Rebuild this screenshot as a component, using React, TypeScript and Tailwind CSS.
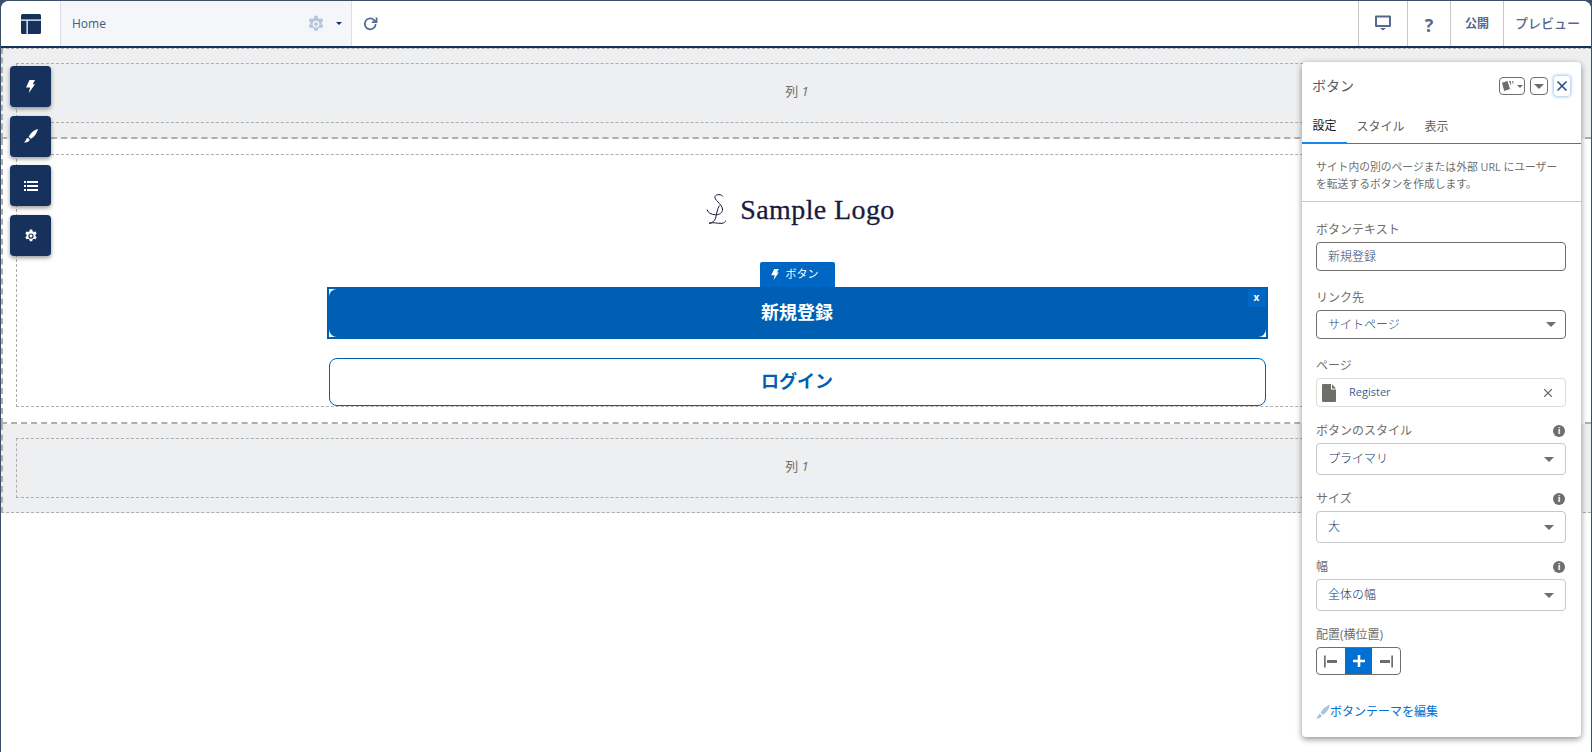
import { X } from "lucide-react";
import type { ReactNode } from "react";

const cjk = "font-['Open_Sans','Noto_Sans_CJK_JP',sans-serif]";

function Caret() {
  return <span className="inline-block w-0 h-0 border-x-[5px] border-x-transparent border-t-[5.5px] border-t-[#706e6b]" />;
}

function Bolt({ className }: { className?: string }) {
  return (
    <svg viewBox="0 0 9 13" className={className} fill="currentColor">
      <path d="M3.500 0H9L6.800 4.200H9L2.800 13l1.300-5.600H0z" />
    </svg>
  );
}

function Brush({ className }: { className?: string }) {
  return (
    <svg viewBox="0 0 14 14" className={className} fill="currentColor">
      <path d="M14 0C10 1 6.500 4 4.700 7.800l2 2C10 8.500 13 4 14 0z" />
      <path d="M3.800 8.700C2 9.200 2 12 0 13.500c2.800.3 5.500-.6 5.700-3z" />
    </svg>
  );
}

function ListIcon({ className }: { className?: string }) {
  return (
    <svg viewBox="0 0 14 10" className={className} fill="currentColor">
      <path d="M0 0h2v2H0zM3 0h11v2H3zM0 4h2v2H0zM3 4h11v2H3zM0 8h2v2H0zM3 8h11v2H3z" />
    </svg>
  );
}

function Gear({ className }: { className?: string }) {
  return (
    <svg viewBox="0 0 24 24" className={className} fill="currentColor" fillRule="evenodd">
      <path d="M10 1h4l.7 3 2.100 1.200 2.900-.9 2 3.400-2.200 2.100v2.400l2.200 2.100-2 3.400-2.900-.9-2.100 1.200-.7 3h-4l-.7-3-2.100-1.200-2.900.9-2-3.400 2.200-2.100V9.800L2.300 7.700l2-3.400 2.900.9L9.300 4zM12 7.500a4.500 4.500 0 1 0 0 9 4.500 4.500 0 0 0 0-9z" />
      <circle cx="12" cy="12" r="2.500" />
    </svg>
  );
}

function Tool({ children }: { children: ReactNode }) {
  return (
    <div className="w-[41px] h-[41px] rounded-[4px] bg-[#16325c] text-white flex items-center justify-center shadow-[0_2px_4px_rgba(0,0,0,0.4)]">
      {children}
    </div>
  );
}

function Field({ label, info, children }: { label: string; info?: boolean; children: ReactNode }) {
  return (
    <div>
      <div className="flex items-center justify-between h-[18px] mb-[3px] text-[12px] text-[#706e6b]">
        <span>{label}</span>
        {info && (
          <span className="mr-[1px] w-[12px] h-[12px] rounded-full bg-[#706e6b] text-white text-[9px] font-bold leading-[12px] text-center">i</span>
        )}
      </div>
      {children}
    </div>
  );
}

function SelectBox({ value }: { value: string }) {
  return (
    <div className="h-[32px] rounded-[4px] border border-[#c9c7c5] flex items-center justify-between pl-[11px] pr-[11px] text-[12px] text-[#16325c] font-light">
      <span>{value}</span>
      <Caret />
    </div>
  );
}

function Logo() {
  return (
    <div className="ml-[7px] flex items-center gap-[14px] text-[#1a1a3e]">
      <svg viewBox="0 0 20 30" className="w-[20px] h-[30px]" fill="none" stroke="currentColor" strokeWidth="1">
        <path d="M17 2.500C15.500.3 10.500-.3 9 2.500 7.500 5.500 16 10 16.500 15c.3 3.500-3 6-7 5.800C5 20.500 2 19 1 15.500" />
        <path d="M13.500 11.500C11 15 10.500 21 9.500 24.500 9 26.500 6.500 29 3 29.300c5-1.500 8.500.5 13 0 2-.2 3.300-1.300 4-3" />
      </svg>
      <span className="font-['Liberation_Serif',serif] text-[28px] leading-none tracking-[0.4px] mt-[3px] [-webkit-text-stroke:0.3px]">Sample Logo</span>
    </div>
  );
}

function Panel() {
  return (
    <div className={`absolute left-[1302px] top-[62px] w-[279px] h-[675px] bg-white rounded-[4px] shadow-[0_2px_6px_rgba(0,0,0,0.45)] ${cjk}`}>
      <div className="h-[48px] flex items-center justify-between pl-[10px] pr-[10px]">
        <span className="text-[14px] text-[#5a5a58] mt-[-1px]">ボタン</span>
        <div className="flex items-center gap-[5px]">
          <div className="w-[26px] h-[18px] border border-[#706e6b] rounded-[4px] flex items-center justify-center gap-[2px]">
            <svg viewBox="0 0 13 10" className="w-[13px] h-[10px]" fill="#706e6b">
              <path d="M0 1.800 5.500 0 8 8 2.200 10zM7 0h1.800l.4 5zM10 .3h1.600L11 3.500z" />
            </svg>
            <span className="w-0 h-0 border-x-[3px] border-x-transparent border-t-[3px] border-t-[#706e6b]" />
          </div>
          <div className="w-[18px] h-[18px] border border-[#706e6b] rounded-[4px] flex items-center justify-center">
            <span className="w-0 h-0 border-x-[5px] border-x-transparent border-t-[5px] border-t-[#706e6b]" />
          </div>
          <div className="w-[18px] h-[22px] border border-[#c5dcf5] rounded-[4px] flex items-center justify-center shadow-[0_0_3px_#8fc1f0]">
            <X className="w-[16px] h-[16px] text-[#1b4f8f]" strokeWidth={2.4} />
          </div>
        </div>
      </div>
      <div className="flex h-[34px] border-b border-[#706e6b] text-[12px]">
        <div className="w-[45px] flex items-center justify-center text-[#181818] border-b-[2px] border-[#1589ee] h-[34px]">設定</div>
        <div className="w-[67px] flex items-center justify-center text-[#5f5f5f]">スタイル</div>
        <div className="w-[45px] flex items-center justify-center text-[#5f5f5f]">表示</div>
      </div>
      <div className="h-[58px] border-b border-[#c9c7c5] pl-[14px] pr-[4px] pt-[14px] text-[10.8px] leading-[17px] text-[#706e6b] whitespace-nowrap">
        サイト内の別のページまたは外部 URL にユーザー<br />を転送するボタンを作成します。
      </div>
      <div className="pl-[14px] pr-[15px] pt-[19px] flex flex-col">
        <Field label="ボタンテキスト">
          <div className="h-[29px] rounded-[4px] border border-[#706e6b] flex items-center pl-[11px] text-[12px] text-[#1f3f73] font-light">新規登録</div>
        </Field>
        <div className="h-[18px]" />
        <Field label="リンク先">
          <div className="h-[29px] rounded-[4px] border border-[#706e6b] flex items-center justify-between pl-[11px] pr-[9px] text-[12px] text-[#1f3f73] font-light">
            <span>サイトページ</span>
            <Caret />
          </div>
        </Field>
        <div className="h-[18px]" />
        <Field label="ページ">
          <div className="h-[29px] rounded-[4px] border border-[#dddbda] flex items-center pl-[5px] pr-[10px] text-[11px] text-[#3b5f94]">
            <svg viewBox="0 0 14 18" className="w-[14px] h-[18px]" fill="#706e6b">
              <path d="M1 0h8v5.500h5V17a1 1 0 0 1-1 1H1a1 1 0 0 1-1-1V1a1 1 0 0 1 1-1zM10 .3 14 4.500h-4z" />
            </svg>
            <span className="ml-[13px] flex-1">Register</span>
            <X className="w-[14px] h-[14px] text-[#706e6b]" />
          </div>
        </Field>
        <div className="h-[15px]" />
        <Field label="ボタンのスタイル" info>
          <SelectBox value="プライマリ" />
        </Field>
        <div className="h-[15px]" />
        <Field label="サイズ" info>
          <SelectBox value="大" />
        </Field>
        <div className="h-[15px]" />
        <Field label="幅" info>
          <SelectBox value="全体の幅" />
        </Field>
        <div className="h-[15px]" />
        <Field label="配置(横位置)">
          <div className="flex w-[85px] h-[28px] rounded-[4px] border border-[#706e6b] overflow-hidden">
            <div className="flex-1 flex items-center justify-center text-[#706e6b]">
              <svg viewBox="0 0 13 13" className="w-[13px] h-[13px]" fill="currentColor"><path d="M0 .5h1.700v12H0zM3 5h10v3H3z" /></svg>
            </div>
            <div className="flex-1 flex items-center justify-center bg-[#0070d2] text-white">
              <svg viewBox="0 0 12 12" className="w-[12px] h-[12px]" fill="currentColor"><path d="M4.700 0h2.600v4.700H12v2.600H7.300V12H4.700V7.300H0V4.700h4.700z" /></svg>
            </div>
            <div className="flex-1 flex items-center justify-center text-[#706e6b]">
              <svg viewBox="0 0 13 13" className="w-[13px] h-[13px]" fill="currentColor"><path d="M11.300 .5H13v12h-1.700zM0 5h10v3H0z" /></svg>
            </div>
          </div>
        </Field>
        <div className="mt-[28px] flex items-center text-[12px] text-[#0070d2]">
          <Brush className="w-[14px] h-[14px] text-[#a9c4dc]" />
          <span>ボタンテーマを編集</span>
        </div>
      </div>
    </div>
  );
}

export default function App() {
  return (
    <div className={`relative w-[1592px] h-[752px] overflow-hidden bg-[#3b4f68] pt-[1px] pl-[1px] pr-[1px] ${cjk}`}>
      <div className="h-full bg-white rounded-t-[8px] overflow-hidden flex flex-col">
        <header className="h-[47px] shrink-0 flex border-b-[2px] border-[#16325c] bg-white">
          <div className="w-[60px] flex items-center justify-center border-r border-[#d8dde6]">
            <svg viewBox="0 0 20 20" className="w-[20px] h-[20px]" fill="#16325c">
              <path d="M1.500 0h17A1.500 1.500 0 0 1 20 1.500v4H0v-4A1.500 1.500 0 0 1 1.500 0zM0 6.800h5.500V20h-4A1.500 1.500 0 0 1 0 18.500zM6.800 6.800H20v11.700a1.500 1.500 0 0 1-1.500 1.500H6.800z" />
            </svg>
          </div>
          <div className="w-[291px] bg-[#f4f6f9] border-r border-[#d8dde6] flex items-center pl-[11px] pr-[9px] text-[12px] text-[#3b5f80]">
            <span className="flex-1">Home</span>
            <Gear className="w-[18px] h-[18px] text-[#b4c6dc]" />
            <span className="ml-[11px] w-0 h-0 border-x-[3px] border-x-transparent border-t-[3px] border-t-[#16325c]" />
          </div>
          <div className="flex-1 flex items-center pl-[11px]">
            <svg viewBox="0 0 16 16" className="w-[15px] h-[15px]" fill="none" stroke="#54698d" strokeWidth="1.800">
              <path d="M13.500 8.500A5.800 5.800 0 1 1 11.500 4L14 6" />
              <path d="M14.500 1.500V6.500H9.500" />
            </svg>
          </div>
          <div className="w-[49px] border-l border-[#c9c7c5] flex items-center justify-center text-[#54698d]">
            <svg viewBox="0 0 16 16" className="w-[16px] h-[16px] mt-[-1px]" fill="currentColor" fillRule="evenodd">
              <path d="M1 .5h14a1 1 0 0 1 1 1V11a1 1 0 0 1-1 1H1a1 1 0 0 1-1-1V1.500a1 1 0 0 1 1-1zM2 2.500V10h12V2.500zM5 13h6l-3 2.500z" />
            </svg>
          </div>
          <div className="w-[43px] border-l border-[#c9c7c5] flex items-center justify-center text-[#54698d] text-[18px] font-bold pt-[3px]">?</div>
          <div className="w-[53px] border-l border-[#c9c7c5] flex items-center justify-center text-[#54698d] text-[12px] font-bold">公開</div>
          <div className="w-[88px] border-l border-[#c9c7c5] flex items-center justify-center text-[#54698d] text-[13px] font-medium">プレビュー</div>
        </header>

        <main className="flex-1 flex flex-col">
          <section className="h-[91px] bg-[#eeeff1] border-t border-b-2 border-l-2 border-dashed border-[#b0adab] px-[13px] pt-[14px]">
            <div className="h-[60px] pb-[2px] border border-dashed border-[#b0adab] flex items-center justify-center text-[13px] text-[#706e6b]">
              <span>列 <i>1</i></span>
            </div>
          </section>
          <section className="h-[285px] border-b-2 border-l-2 border-dashed border-[#b0adab] px-[13px] pt-[15px]">
            <div className="h-[253px] border border-dashed border-[#b0adab] flex flex-col items-center">
              <div className="mt-[38px] h-[32px]"><Logo /></div>
              <div className="mt-[37px] w-[75px] h-[25px] bg-[#0066c4] rounded-t-[2px] text-white text-[11px] flex items-center pl-[11px] gap-[7px]">
                <Bolt className="w-[8px] h-[11px]" />
                <span>ボタン</span>
              </div>
              <div className="relative w-[941px] h-[52px] bg-white border-2 border-[#005fb2]">
                <div className="h-full pb-[2px] rounded-[8px] bg-[#005fb2] text-white text-[18px] font-bold flex items-center justify-center">新規登録</div>
                <span className="absolute right-0 top-0 w-[18px] h-[18px] bg-[#0067c5] text-white text-[10px] font-bold leading-[16px] text-center">x</span>
              </div>
              <div className="mt-[19px] w-[937px] h-[48px] pb-[2px] shrink-0 rounded-[8px] border border-[#005fb2] bg-white text-[#005fb2] text-[18px] font-bold flex items-center justify-center">
                ログイン
              </div>
            </div>
          </section>
          <section className="h-[89px] bg-[#eeeff1] border-b border-l-2 border-dashed border-[#b0adab] px-[13px] pt-[14px]">
            <div className="h-[60px] pb-[2px] border border-dashed border-[#b0adab] flex items-center justify-center text-[13px] text-[#706e6b]">
              <span>列 <i>1</i></span>
            </div>
          </section>
        </main>
      </div>

      <div className="absolute left-[10px] top-[66px] flex flex-col gap-[8.7px]">
        <Tool><Bolt className="w-[9px] h-[13px]" /></Tool>
        <Tool><Brush className="w-[14px] h-[14px]" /></Tool>
        <Tool><ListIcon className="w-[14px] h-[10px]" /></Tool>
        <Tool><Gear className="w-[14px] h-[14px]" /></Tool>
      </div>

      <Panel />
    </div>
  );
}
